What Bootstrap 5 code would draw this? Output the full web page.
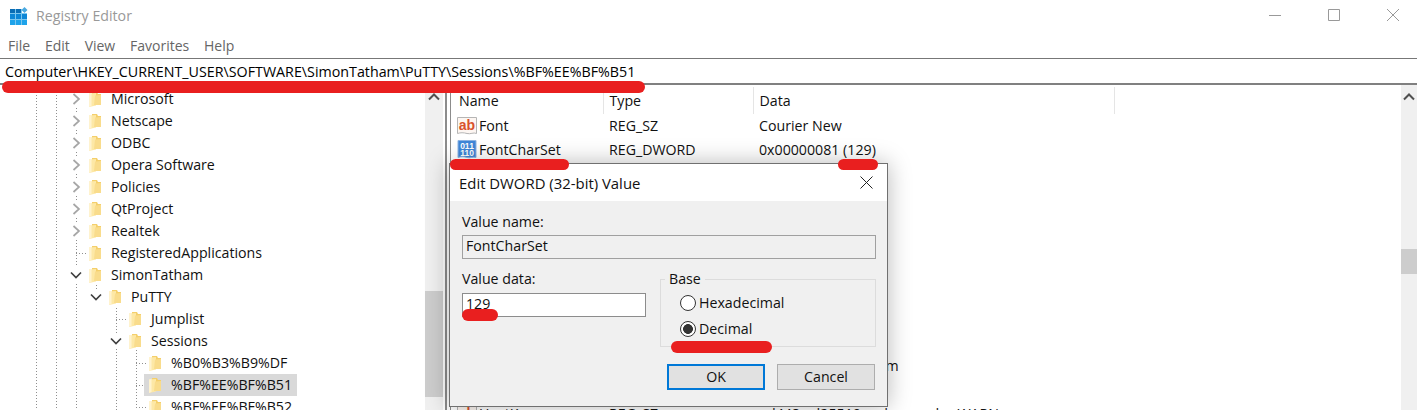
<!DOCTYPE html>
<html lang="en">
<head>
  <meta charset="UTF-8">
  <title>Registry Editor</title>
  <link href="https://cdn.jsdelivr.net/npm/bootstrap@5.3.0/dist/css/bootstrap.min.css" rel="stylesheet">
  <style>
    body {
      margin: 0;
      height: 410px;
      overflow: hidden;
      background: #fff;
      color: #111;
      font-family: "Open Sans", "Noto Sans", sans-serif;
      font-size: 14.2px;
      line-height: 20px;
    }
    .reg-window { height: 410px; overflow: hidden; }

    /* title bar and menu */
    .title-strip { height: 32px; padding-left: 10px; color: #999; }
    .title-strip .app-name { margin-left: 8px; }
    .win-btns { gap: 47px; padding: 0 18px 3px 0; }
    .menu-strip { height: 26px; padding: 2px 0 0 8px; gap: 14.8px; color: #666; font-size: 14px; }
    .addr-strip {
      height: 27px;
      padding: 3px 0 0 5px;
      border-top: 1px solid #777;
      border-bottom: 2px solid #808080;
      color: #000;
      font-size: 14.27px;
    }

    /* tree side */
    .reg-main { height: 325px; }
    .tree-pane { width: 425px; padding-top: 3px; overflow: hidden; position: relative; flex: none; }
    .tree-guides { position: absolute; left: 0; top: 0; }
    .tree-row { height: 22px; position: relative; white-space: nowrap; }
    .lv1 { padding-left: 69px; }
    .lv2 { padding-left: 89px; }
    .lv3 { padding-left: 109px; }
    .lv4 { padding-left: 129px; }
    .tree-arrow { width: 14px; flex: none; }
    .tree-label { padding: 0 5px; height: 22px; margin-left: 1px; }
    .tree-label.picked { background: #d9d9d9; }
    .tree-label .name { margin-left: 10px; }
    .scroll-a { width: 18px; background: #f0f0f0; flex: none; }
    .scroll-b { width: 16px; background: #f0f0f0; flex: none; }
    .scroll-a .arrow, .scroll-b .arrow { margin: 8px 0 0 3px; }
    .scroll-b .arrow { margin-left: 2px; }
    .thumb-a { height: 106px; margin-top: 190px; background: #cdcdcd; }
    .thumb-b { height: 25px; margin-top: 148px; background: #cdcdcd; }
    .split { width: 6px; margin-left: 2px; border-left: 2px solid #8c8c8c; border-right: 1px solid #8c8c8c; flex: none; }

    /* value list */
    .list-pane { min-width: 0; overflow: hidden; padding-top: 2px; }
    .reg-table { table-layout: fixed; width: 950px; }
    .c-name { width: 152px; }
    .c-type { width: 150px; }
    .c-data { width: 361px; }
    .reg-table th, .reg-table td {
      padding: 0 0 0 6px;
      height: 24px;
      font-weight: 400;
      color: #111;
      white-space: nowrap;
      background: transparent;
      vertical-align: middle;
    }
    .reg-table thead th { height: 27px; }
    .reg-table thead th.col-line { border-right: 1px solid #e5e5e5; }
    .reg-table thead th:first-child { padding-left: 8px; }
    .reg-table td:first-child { padding-left: 6px; }
    .val-name { gap: 2px; }

    /* dialog */
    .edit-dlg {
      position: absolute;
      left: 449px;
      top: 163px;
      width: 439px;
      height: 244px;
      background: #f0f0f0;
      border: 1px solid #707070;
      box-shadow: 0 0 22px rgba(0, 0, 0, .28);
      color: #111;
    }
    .dlg-head { height: 37px; background: #fff; padding: 0 14px 0 9px; font-size: 14.9px; }
    .dlg-body { padding: 11px 11px 0 12px; }
    .dlg-label { display: block; margin: 0 0 3px; }
    .dlg-input {
      display: block;
      height: 24px;
      padding: 0 3px 3px;
      border: 1px solid #8c8c8c;
      font: inherit;
      color: #111;
      background: #fff;
      outline: 0;
      border-radius: 0;
    }
    .dlg-input.wide { width: 414px; background: #f0f0f0; margin-bottom: 10px; border-color: #a0a0a0; }
    .dlg-input.short { width: 184px; margin-top: 4px; }
    .dlg-cols { height: 78px; }
    .base-box {
      width: 216px;
      height: 78px;
      margin: 0 0 0 14px;
      padding: 1px 0 0 19px;
      border: 1px solid #dcdcdc;
      min-width: 0;
    }
    .base-box legend {
      float: none;
      width: auto;
      margin: 0 0 0 -15px;
      padding: 0 4px;
      font-size: 14.2px;
      line-height: 20px;
    }
    .radio-line { height: 26px; gap: 3px; }
    .radio-line .form-check-input {
      width: 16px;
      height: 16px;
      margin: 0;
      border: 1px solid #333;
      background-color: #fff;
      flex: none;
    }
    .radio-line .form-check-input:checked {
      background-color: #fff;
      border-color: #333;
      background-image: radial-gradient(circle, #333 0 4.6px, transparent 5.2px);
    }
    .dlg-foot { margin-top: 17px; padding-right: 1px; gap: 12px; }
    .dlg-btn {
      width: 98px;
      height: 26px;
      padding: 0;
      border: 1px solid #adadad;
      border-radius: 0;
      background: #e1e1e1;
      color: #111;
      font-size: 14.2px;
    }
    .dlg-btn.is-default { border: 2px solid #0078d7; }

    /* red marker strokes drawn over the screenshot */
    .ink { position: absolute; background: #e91f1f; border-radius: 7px; }
    .ink-addr { left: 2px; top: 81px; width: 643px; height: 12px; }
    .ink-name { left: 450px; top: 159px; width: 119px; height: 11px; }
    .ink-dec { left: 838px; top: 159px; width: 40px; height: 11px; }
    .ink-val { left: 462px; top: 309px; width: 36px; height: 12px; }
    .ink-base { left: 671px; top: 341px; width: 101px; height: 12px; }
  </style>
</head>
<body>
  <svg width="0" height="0" class="d-block">
    <symbol id="folder" viewBox="0 0 12 15">
      <path d="M3 0h5l1 2h3v11H3z" fill="#f4cf6b"/>
      <path d="M0 1.500 7 1v12.500L0 15z" fill="#fde8a6"/>
      <path d="M6 3.500 12 3v10H5z" fill="#f9dc8c"/>
      <path d="M0 1.500 2.500 1v13L0 15z" fill="#fff3cf"/>
    </symbol>
    <symbol id="closed" viewBox="0 0 14 22">
      <path d="M4.500 6 10 11l-5.500 5" fill="none" stroke="#a6a6a6" stroke-width="1.700"/>
    </symbol>
    <symbol id="open" viewBox="0 0 14 22">
      <path d="M2 8.500 7 13.500l5-5" fill="none" stroke="#404040" stroke-width="1.700"/>
    </symbol>
    <symbol id="upcaret" viewBox="0 0 12 8">
      <path d="M1 6.500 6 1.500l5 5" fill="none" stroke="#505050" stroke-width="2"/>
    </symbol>
  </svg>

  <div class="reg-window">
    <div class="title-strip d-flex align-items-center">
      <svg width="18" height="18" viewBox="0 0 18 18">
        <path d="M0 2h12v4h5v12H0z" fill="#7cc6ee"/>
        <path d="M0 2h5v4H0zM6 2h5v4H6z" fill="#0a6db5"/>
        <path d="M0 7h5v5H0zM6 7h5v5H6zM12 7h5v5h-5z" fill="#0d86d6"/>
        <path d="M0 13h5v5H0zM6 13h5v5H6zM12 13h5v5h-5z" fill="#1ea3ea"/>
        <path d="M14.500 0 17.500 3 14.500 6 11.500 3z" fill="#4aa9e0"/>
      </svg>
      <span class="app-name">Registry Editor</span>
      <div class="win-btns d-flex align-items-center ms-auto">
        <svg width="12" height="12" viewBox="0 0 12 12"><path d="M0 6.500h12" stroke="#999"/></svg>
        <svg width="12" height="12" viewBox="0 0 12 12"><path d="M.5.500h11v11H.5z" fill="none" stroke="#999"/></svg>
        <svg width="12" height="12" viewBox="0 0 12 12"><path d="M0 0l12 12M12 0 0 12" stroke="#999"/></svg>
      </div>
    </div>

    <div class="menu-strip d-flex align-items-center">
      <span>File</span><span>Edit</span><span>View</span><span>Favorites</span><span>Help</span>
    </div>

    <div class="addr-strip">Computer\HKEY_CURRENT_USER\SOFTWARE\SimonTatham\PuTTY\Sessions\%BF%EE%BF%B51</div>

    <div class="reg-main d-flex">
      <div class="tree-pane">
        <svg class="tree-guides" width="425" height="325" viewBox="0 85 425 325" fill="none" stroke="#8f8f8f" stroke-dasharray="1 2">
          <path d="M36.500 86v325M56.500 86v325M76.500 86v4M76.500 108v4M76.500 130v4M76.500 152v4M76.500 174v4M76.500 196v4M76.500 218v4M76.500 240v27M76.500 284v127"/>
          <path d="M76 253.500h12M116.500 308v26M116 319.500h12M116.500 349v62M136.500 350v61M136 363.500h12M136 385.500h12M136 407.500h12M96.500 285v4"/>
        </svg>

        <div class="tree-row lv1 d-flex align-items-center"><svg class="tree-arrow" width="14" height="22"><use href="#closed"/></svg><span class="tree-label d-flex align-items-center"><svg width="12" height="15"><use href="#folder"/></svg><span class="name">Microsoft</span></span></div>
        <div class="tree-row lv1 d-flex align-items-center"><svg class="tree-arrow" width="14" height="22"><use href="#closed"/></svg><span class="tree-label d-flex align-items-center"><svg width="12" height="15"><use href="#folder"/></svg><span class="name">Netscape</span></span></div>
        <div class="tree-row lv1 d-flex align-items-center"><svg class="tree-arrow" width="14" height="22"><use href="#closed"/></svg><span class="tree-label d-flex align-items-center"><svg width="12" height="15"><use href="#folder"/></svg><span class="name">ODBC</span></span></div>
        <div class="tree-row lv1 d-flex align-items-center"><svg class="tree-arrow" width="14" height="22"><use href="#closed"/></svg><span class="tree-label d-flex align-items-center"><svg width="12" height="15"><use href="#folder"/></svg><span class="name">Opera Software</span></span></div>
        <div class="tree-row lv1 d-flex align-items-center"><svg class="tree-arrow" width="14" height="22"><use href="#closed"/></svg><span class="tree-label d-flex align-items-center"><svg width="12" height="15"><use href="#folder"/></svg><span class="name">Policies</span></span></div>
        <div class="tree-row lv1 d-flex align-items-center"><svg class="tree-arrow" width="14" height="22"><use href="#closed"/></svg><span class="tree-label d-flex align-items-center"><svg width="12" height="15"><use href="#folder"/></svg><span class="name">QtProject</span></span></div>
        <div class="tree-row lv1 d-flex align-items-center"><svg class="tree-arrow" width="14" height="22"><use href="#closed"/></svg><span class="tree-label d-flex align-items-center"><svg width="12" height="15"><use href="#folder"/></svg><span class="name">Realtek</span></span></div>
        <div class="tree-row lv1 d-flex align-items-center"><span class="tree-arrow"></span><span class="tree-label d-flex align-items-center"><svg width="12" height="15"><use href="#folder"/></svg><span class="name">RegisteredApplications</span></span></div>
        <div class="tree-row lv1 d-flex align-items-center"><svg class="tree-arrow" width="14" height="22"><use href="#open"/></svg><span class="tree-label d-flex align-items-center"><svg width="12" height="15"><use href="#folder"/></svg><span class="name">SimonTatham</span></span></div>
        <div class="tree-row lv2 d-flex align-items-center"><svg class="tree-arrow" width="14" height="22"><use href="#open"/></svg><span class="tree-label d-flex align-items-center"><svg width="12" height="15"><use href="#folder"/></svg><span class="name">PuTTY</span></span></div>
        <div class="tree-row lv3 d-flex align-items-center"><span class="tree-arrow"></span><span class="tree-label d-flex align-items-center"><svg width="12" height="15"><use href="#folder"/></svg><span class="name">Jumplist</span></span></div>
        <div class="tree-row lv3 d-flex align-items-center"><svg class="tree-arrow" width="14" height="22"><use href="#open"/></svg><span class="tree-label d-flex align-items-center"><svg width="12" height="15"><use href="#folder"/></svg><span class="name">Sessions</span></span></div>
        <div class="tree-row lv4 d-flex align-items-center"><span class="tree-arrow"></span><span class="tree-label d-flex align-items-center"><svg width="12" height="15"><use href="#folder"/></svg><span class="name">%B0%B3%B9%DF</span></span></div>
        <div class="tree-row lv4 d-flex align-items-center"><span class="tree-arrow"></span><span class="tree-label picked d-flex align-items-center"><svg width="12" height="15"><use href="#folder"/></svg><span class="name">%BF%EE%BF%B51</span></span></div>
        <div class="tree-row lv4 d-flex align-items-center"><span class="tree-arrow"></span><span class="tree-label d-flex align-items-center"><svg width="12" height="15"><use href="#folder"/></svg><span class="name">%BF%EE%BF%B52</span></span></div>
      </div>

      <div class="scroll-a">
        <svg class="arrow d-block" width="12" height="8"><use href="#upcaret"/></svg>
        <div class="thumb-a"></div>
      </div>
      <div class="split"></div>

      <div class="list-pane flex-grow-1">
        <table class="table table-borderless reg-table mb-0">
          <colgroup><col class="c-name"><col class="c-type"><col class="c-data"><col></colgroup>
          <thead>
            <tr><th class="col-line">Name</th><th class="col-line">Type</th><th class="col-line">Data</th><th></th></tr>
          </thead>
          <tbody>
            <tr>
              <td><span class="val-name d-flex align-items-center">
                <svg width="20" height="20" viewBox="0 0 20 20"><path d="M.5 1.500h19v16c-3-1.500-6 1-9.500 0s-6.500-1-9.500 0z" fill="#fdf6f2" stroke="#b5b5b5"/><text x="10" y="13.500" text-anchor="middle" font-family="Liberation Sans" font-weight="700" font-size="14" fill="#d9512c">ab</text></svg>Font</span></td>
              <td>REG_SZ</td><td>Courier New</td><td></td>
            </tr>
            <tr>
              <td><span class="val-name d-flex align-items-center">
                <svg width="20" height="20" viewBox="0 0 20 20"><path d="M1 .500h18v17c-3-1-6 1-9 0s-6-1-9 0z" fill="#3f86d8" stroke="#8db4e4"/><text x="10" y="8.500" text-anchor="middle" font-family="Liberation Sans" font-weight="700" font-size="8.500" fill="#fff">011</text><text x="10" y="16" text-anchor="middle" font-family="Liberation Sans" font-weight="700" font-size="8.500" fill="#fff">110</text></svg>FontCharSet</span></td>
              <td>REG_DWORD</td><td>0x00000081 (129)</td><td></td>
            </tr>
            <tr><td></td><td></td><td></td><td></td></tr>
            <tr><td></td><td></td><td></td><td></td></tr>
            <tr><td></td><td></td><td></td><td></td></tr>
            <tr><td></td><td></td><td></td><td></td></tr>
            <tr><td></td><td></td><td></td><td></td></tr>
            <tr><td></td><td></td><td></td><td></td></tr>
            <tr><td></td><td></td><td></td><td></td></tr>
            <tr><td></td><td></td><td></td><td></td></tr>
            <tr><td></td><td></td><td>gssapi32,sspi,custom</td><td></td></tr>
            <tr><td></td><td></td><td></td><td></td></tr>
            <tr>
              <td><span class="val-name d-flex align-items-center">
                <svg width="20" height="20" viewBox="0 0 20 20"><path d="M.5 1.500h19v16c-3-1.500-6 1-9.500 0s-6.500-1-9.500 0z" fill="#fdf6f2" stroke="#b5b5b5"/><text x="10" y="13.500" text-anchor="middle" font-family="Liberation Sans" font-weight="700" font-size="14" fill="#d9512c">ab</text></svg>HostKey</span></td>
              <td>REG_SZ</td><td>ed448,ed25519,ecdsa,rsa,dsa,WARN</td><td></td>
            </tr>
          </tbody>
        </table>
      </div>

      <div class="scroll-b">
        <svg class="arrow d-block" width="12" height="8"><use href="#upcaret"/></svg>
        <div class="thumb-b"></div>
      </div>
    </div>
  </div>

  <div class="edit-dlg">
    <div class="dlg-head d-flex align-items-center justify-content-between">
      <span>Edit DWORD (32-bit) Value</span>
      <svg width="13" height="13" viewBox="0 0 13 13"><path d="M.5.500l12 12M12.500.500l-12 12" stroke="#222"/></svg>
    </div>
    <div class="dlg-body">
      <label class="dlg-label" for="valueName">Value name:</label>
      <input class="dlg-input wide" id="valueName" type="text" value="FontCharSet" readonly>
      <div class="dlg-cols d-flex">
        <div>
          <label class="dlg-label" for="valueData">Value data:</label>
          <input class="dlg-input short" id="valueData" type="text" value="129">
        </div>
        <fieldset class="base-box">
          <legend>Base</legend>
          <div class="radio-line d-flex align-items-center"><input class="form-check-input" type="radio" name="base" id="baseHex"><label for="baseHex">Hexadecimal</label></div>
          <div class="radio-line d-flex align-items-center"><input class="form-check-input" type="radio" name="base" id="baseDec" checked><label for="baseDec">Decimal</label></div>
        </fieldset>
      </div>
      <div class="dlg-foot d-flex justify-content-end">
        <button type="button" class="dlg-btn is-default">OK</button>
        <button type="button" class="dlg-btn">Cancel</button>
      </div>
    </div>
  </div>

  <div class="ink ink-addr"></div>
  <div class="ink ink-name"></div>
  <div class="ink ink-dec"></div>
  <div class="ink ink-val"></div>
  <div class="ink ink-base"></div>

  <script src="https://cdn.jsdelivr.net/npm/bootstrap@5.3.0/dist/js/bootstrap.bundle.min.js"></script>
</body>
</html>
